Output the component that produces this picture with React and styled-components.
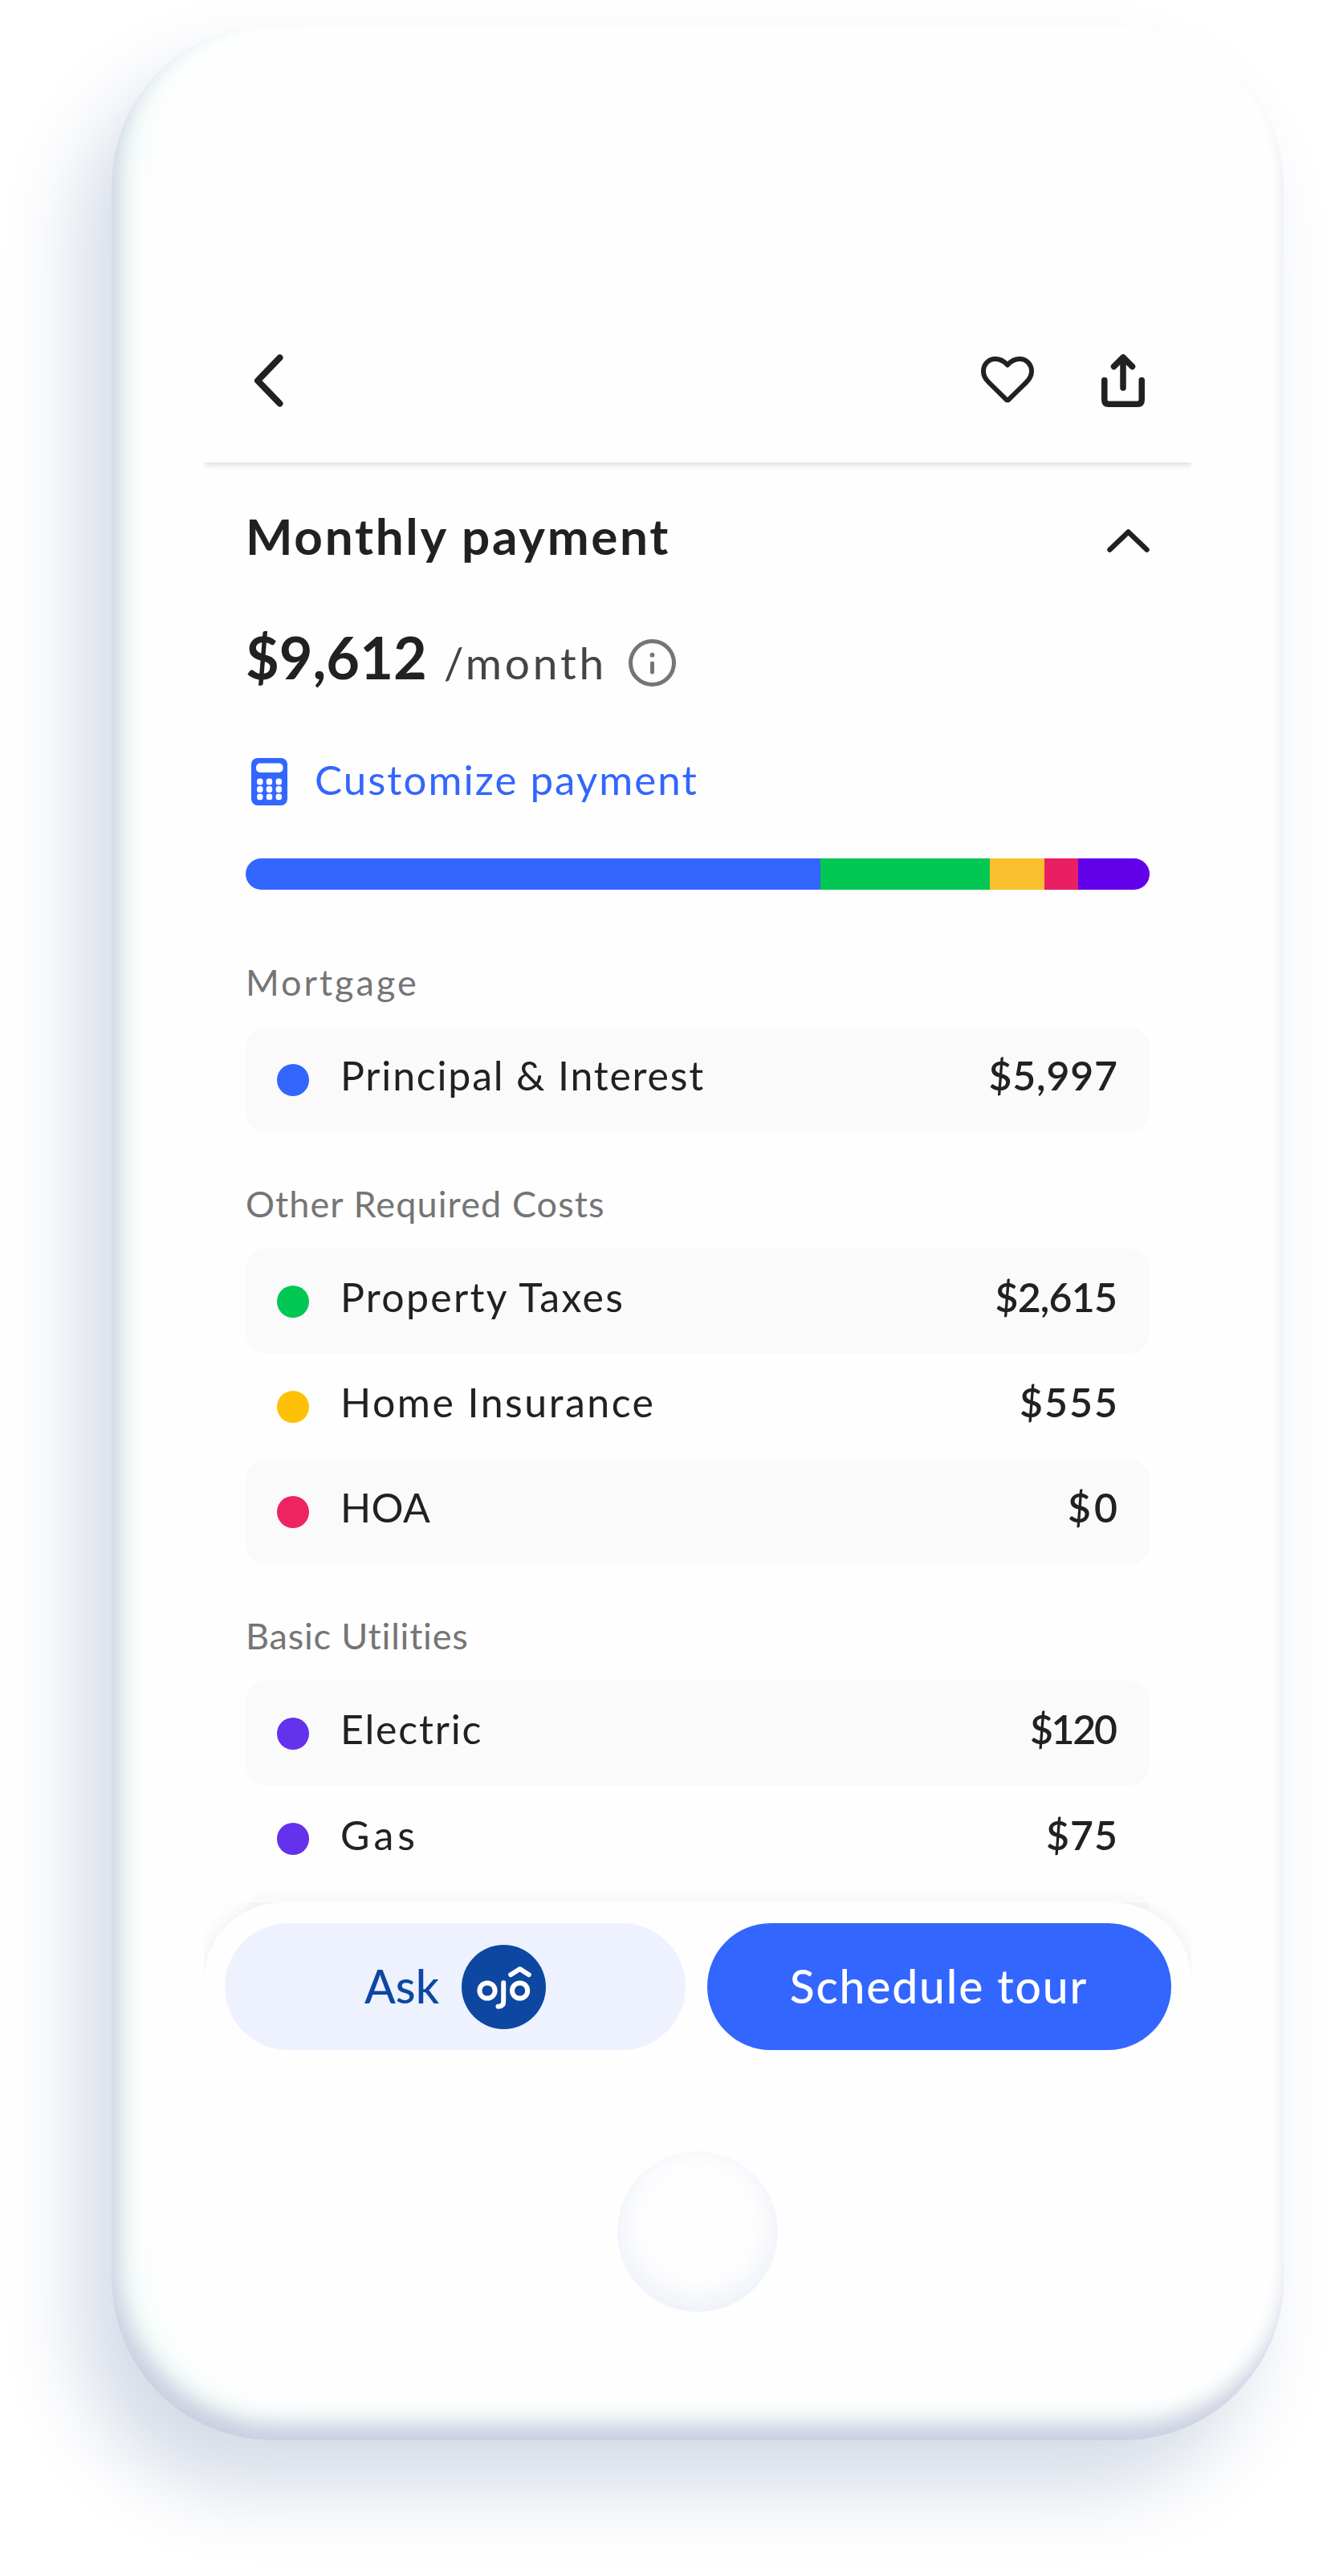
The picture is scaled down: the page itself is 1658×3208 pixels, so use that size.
import React from "react";
import styled, { createGlobalStyle } from "styled-components";

const GlobalStyle = createGlobalStyle`
  * { box-sizing: border-box; }
  body { margin: 0; background: #fff; }
`;

const Page = styled.main`
  width: 1658px;
  height: 3208px;
  padding: 31px 0 0 139px;
  overflow: hidden;
  background: #fff;
  color: #212121;
  font-family: Lato, "Open Sans", sans-serif;
  font-variant-ligatures: none;
`;

const Phone = styled.div`
  display: flex;
  flex-direction: column;
  align-items: center;
  width: 1460px;
  height: 3008px;
  padding-top: 340px;
  border-radius: 200px;
  background: #fefefe;
  box-shadow:
    -40px 60px 100px rgb(213, 219, 231),
    inset 8px -20px 26px rgb(204, 206, 224),
    inset 25px -25px 40px rgb(238, 251, 248);
`;

const Screen = styled.div`
  position: relative;
  display: flex;
  flex-direction: column;
  width: 1230px;
  height: 2220px;
  overflow: hidden;
`;

const Toolbar = styled.header`
  flex: none;
  display: flex;
  align-items: center;
  height: 205px;
  padding: 1px 58px 0 62px;
  background: #fefefe;
  box-shadow: 0 2px 8px rgba(0, 0, 0, 0.17);
`;

const ToolbarActions = styled.div`
  display: flex;
  align-items: center;
  gap: 84px;
  margin-left: auto;
`;

const IconButton = styled.button`
  display: flex;
  padding: 0;
  border: 0;
  background: none;
  color: inherit;
`;

const Icon = styled.svg`
  display: block;
  flex: none;
  overflow: visible;
  fill: none;
  stroke: currentColor;
  stroke-linecap: round;
  stroke-linejoin: round;
`;

const Content = styled.div`
  flex: none;
  display: flex;
  flex-direction: column;
  width: 1126px;
  margin-left: 52px;
  padding-top: 51px;
`;

const TitleRow = styled.div`
  display: flex;
  justify-content: space-between;
  align-items: center;
  height: 80px;
`;

const Title = styled.h1`
  margin: 0;
  font-size: 62px;
  font-weight: 700;
  line-height: 80px;
  letter-spacing: 2.7px;
`;

const ChevronSlot = styled.div`
  padding-top: 13px;
`;

const PriceRow = styled.div`
  display: flex;
  align-items: baseline;
  height: 90px;
  margin-top: 66px;
`;

const Price = styled.strong`
  font-size: 72px;
  font-weight: 700;
  line-height: 90px;
`;

const Period = styled.span`
  margin-left: 21px;
  color: #444;
  font-size: 55px;
  letter-spacing: 3.8px;
`;

const InfoSlot = styled.span`
  align-self: flex-start;
  margin: 23px 0 0 27px;
  color: #757575;
`;

const CustomizeLink = styled.a`
  display: flex;
  align-items: center;
  gap: 34px;
  height: 60px;
  margin: 78px 0 0 7px;
  color: #3366ff;
  font-size: 51px;
  line-height: 60px;
  letter-spacing: 2.05px;

  svg {
    margin-top: 5px;
  }
`;

const CostBar = styled.div`
  display: flex;
  height: 39px;
  margin-top: 68px;
  border-radius: 20px;
  overflow: hidden;
`;

const Segment = styled.span`
  flex: ${(p) => p.$share} 0 0;
  background: ${(p) => p.$color};
`;

const Groups = styled.div`
  display: flex;
  flex-direction: column;
  gap: 60.4px;
  margin-top: 86.6px;
`;

const GroupHeading = styled.h2`
  margin: 0 0 28.4px;
  color: #757575;
  font-size: 45px;
  font-weight: 400;
  line-height: 56px;
  letter-spacing: ${(p) => p.$tracking}px;
`;

const CostRow = styled.div`
  display: flex;
  align-items: center;
  height: 131.2px;
  padding: 0 40px 0 39px;
  border-radius: 26px;

  &:nth-of-type(odd) {
    background: #fafafa;
  }
`;

const Dot = styled.span`
  width: 40px;
  height: 40px;
  border-radius: 50%;
  background: ${(p) => p.$color};
`;

const Label = styled.span`
  flex: 1;
  margin-left: 39px;
  padding-bottom: 11px;
  font-size: 50px;
  line-height: 60px;
  letter-spacing: ${(p) => p.$tracking}px;
`;

const Amount = styled.span`
  margin-right: ${(p) => -p.$tracking}px;
  padding-bottom: 11px;
  font-size: 50px;
  font-weight: 600;
  line-height: 60px;
  letter-spacing: ${(p) => p.$tracking}px;
`;

const ActionBar = styled.footer`
  position: absolute;
  left: 0;
  right: 0;
  bottom: 0;
  display: grid;
  grid-template-columns: 574px 578px;
  gap: 26.5px;
  height: 222px;
  padding: 26px 25px 0 26px;
  border-radius: 98px 98px 0 0;
  background: #fefefe;
  box-shadow: 0 0 26px rgba(0, 0, 0, 0.07);
  clip-path: inset(0);
`;

const ActionButton = styled.button`
  display: flex;
  justify-content: center;
  align-items: center;
  gap: 28px;
  height: 158px;
  padding: 0;
  border: 0;
  border-radius: 79px;
  background: ${(p) => (p.$primary ? "#3366ff" : "#eef2ff")};
  color: ${(p) => (p.$primary ? "#fff" : "#0d47a1")};
  font: 500 57px/70px Lato, "Open Sans", sans-serif;
  letter-spacing: ${(p) => (p.$primary ? "1.8px" : "0")};
`;

const ButtonText = styled.span`
  padding-bottom: 3px;
`;

const HomeButton = styled.div`
  width: 200px;
  height: 200px;
  margin-top: 88px;
  border-radius: 50%;
  box-shadow: inset 0 -10px 40px rgb(233, 238, 247);
`;

const SEGMENTS = [
  ["#3366ff", 716],
  ["#00c853", 210.5],
  ["#fbc02d", 68.5],
  ["#e91e63", 42],
  ["#6200ea", 89],
];

const GROUPS = [
  {
    name: "Mortgage",
    tracking: 3,
    rows: [["Principal & Interest", 1.8, "$5,997", 0.8, "#3366ff"]],
  },
  {
    name: "Other Required Costs",
    tracking: 1.1,
    rows: [
      ["Property Taxes", 2.3, "$2,615", -0.8, "#00c853"],
      ["Home Insurance", 2.5, "$555", 2, "#ffc107"],
      ["HOA", 0.4, "$0", 4, "#ee2462"],
    ],
  },
  {
    name: "Basic Utilities",
    tracking: 0.8,
    rows: [
      ["Electric", 1.8, "$120", -2.3, "#6431ed"],
      ["Gas", 5, "$75", 1, "#6431ed"],
      ["", 0, "", 0, "transparent"],
    ],
  },
];

function BackIcon() {
  return (
    <Icon width="37" height="66" viewBox="0 0 37 66" strokeWidth="8">
      <path d="M32.5 4.5 5 33l27.5 28.500" />
    </Icon>
  );
}

function HeartIcon() {
  return (
    <Icon width="66" height="60" viewBox="0 0 66 60" strokeWidth="6">
      <path d="M33 10.500C28.500 5.500 23.500 3 18 3 9.500 3 3 9.500 3 18.500c0 5.500 2.500 9.500 6.500 13.500L31 53.200c1.300 1.200 2.700 1.200 4 0L56.500 32c4-4 6.500-8 6.500-13.500C63 9.500 56.500 3 48 3c-5.500 0-10.500 2.500-15 7.500Z" />
    </Icon>
  );
}

function ShareIcon() {
  return (
    <Icon width="54" height="66" viewBox="0 0 54 66" strokeWidth="7.500">
      <path d="M3.800 32.500v24.500q0 5.200 5.200 5.200h36q5.200 0 5.200-5.200V32.500" />
      <path d="M27 42V4M15.500 15.500 27 4l11.500 11.500" />
    </Icon>
  );
}

function ChevronUpIcon() {
  return (
    <Icon width="53" height="29" viewBox="0 0 53 29" strokeWidth="6.500">
      <path d="M3.500 25.500 26.500 3.500l23 22" />
    </Icon>
  );
}

function InfoIcon() {
  return (
    <Icon width="59" height="59" viewBox="0 0 59 59" strokeWidth="5">
      <circle cx="29.500" cy="29.500" r="27" />
      <path d="M29.500 30v11" />
      <circle cx="29.500" cy="19.700" r="2.900" fill="currentColor" stroke="none" />
    </Icon>
  );
}

function CalculatorIcon() {
  return (
    <Icon width="45" height="59" viewBox="0 0 45 59">
      <rect width="45" height="59" rx="8" fill="currentColor" stroke="none" />
      <g fill="#fff" stroke="none">
        <rect x="6" y="6.500" width="33.500" height="11.500" rx="5" />
        {[29.500, 39, 48.300].map((y) =>
          [10.800, 22.500, 34.300].map((x) => (
            <rect key={`${x}-${y}`} x={x - 3.700} y={y - 3.900} width="7.400" height="7.800" rx="3.200" />
          ))
        )}
      </g>
    </Icon>
  );
}

function OjoLogo() {
  return (
    <Icon width="105" height="105" viewBox="0 0 105 105" strokeWidth="6">
      <circle cx="52.500" cy="52.500" r="52.500" fill="#0d47a1" stroke="none" />
      <g stroke="#fff">
        <circle cx="32" cy="57" r="9.600" />
        <circle cx="72.600" cy="57" r="9.600" />
        <path d="M52.200 47.300v23.200q0 6.300-6.700 6.300" />
        <path d="M61.200 37.200 72.600 30l11.200 7.200" />
      </g>
    </Icon>
  );
}

export default function App() {
  return (
    <Page>
      <GlobalStyle />
      <Phone>
        <Screen>
          <Toolbar>
            <IconButton aria-label="Back"><BackIcon /></IconButton>
            <ToolbarActions>
              <IconButton aria-label="Save"><HeartIcon /></IconButton>
              <IconButton aria-label="Share"><ShareIcon /></IconButton>
            </ToolbarActions>
          </Toolbar>

          <Content>
            <TitleRow>
              <Title>Monthly payment</Title>
              <ChevronSlot><ChevronUpIcon /></ChevronSlot>
            </TitleRow>
            <PriceRow>
              <Price>$9,612</Price>
              <Period>/month</Period>
              <InfoSlot><InfoIcon /></InfoSlot>
            </PriceRow>
            <CustomizeLink>
              <CalculatorIcon />
              Customize payment
            </CustomizeLink>
            <CostBar>
              {SEGMENTS.map(([color, share]) => (
                <Segment key={color} $color={color} $share={share} />
              ))}
            </CostBar>
            <Groups>
              {GROUPS.map((group) => (
                <section key={group.name}>
                  <GroupHeading $tracking={group.tracking}>{group.name}</GroupHeading>
                  {group.rows.map(([label, labelTracking, amount, amountTracking, color]) => (
                    <CostRow key={label}>
                      <Dot $color={color} />
                      <Label $tracking={labelTracking}>{label}</Label>
                      <Amount $tracking={amountTracking}>{amount}</Amount>
                    </CostRow>
                  ))}
                </section>
              ))}
            </Groups>
          </Content>

          <ActionBar>
            <ActionButton>
              <ButtonText>Ask</ButtonText>
              <OjoLogo />
            </ActionButton>
            <ActionButton $primary>
              <ButtonText>Schedule tour</ButtonText>
            </ActionButton>
          </ActionBar>
        </Screen>
        <HomeButton />
      </Phone>
    </Page>
  );
}
